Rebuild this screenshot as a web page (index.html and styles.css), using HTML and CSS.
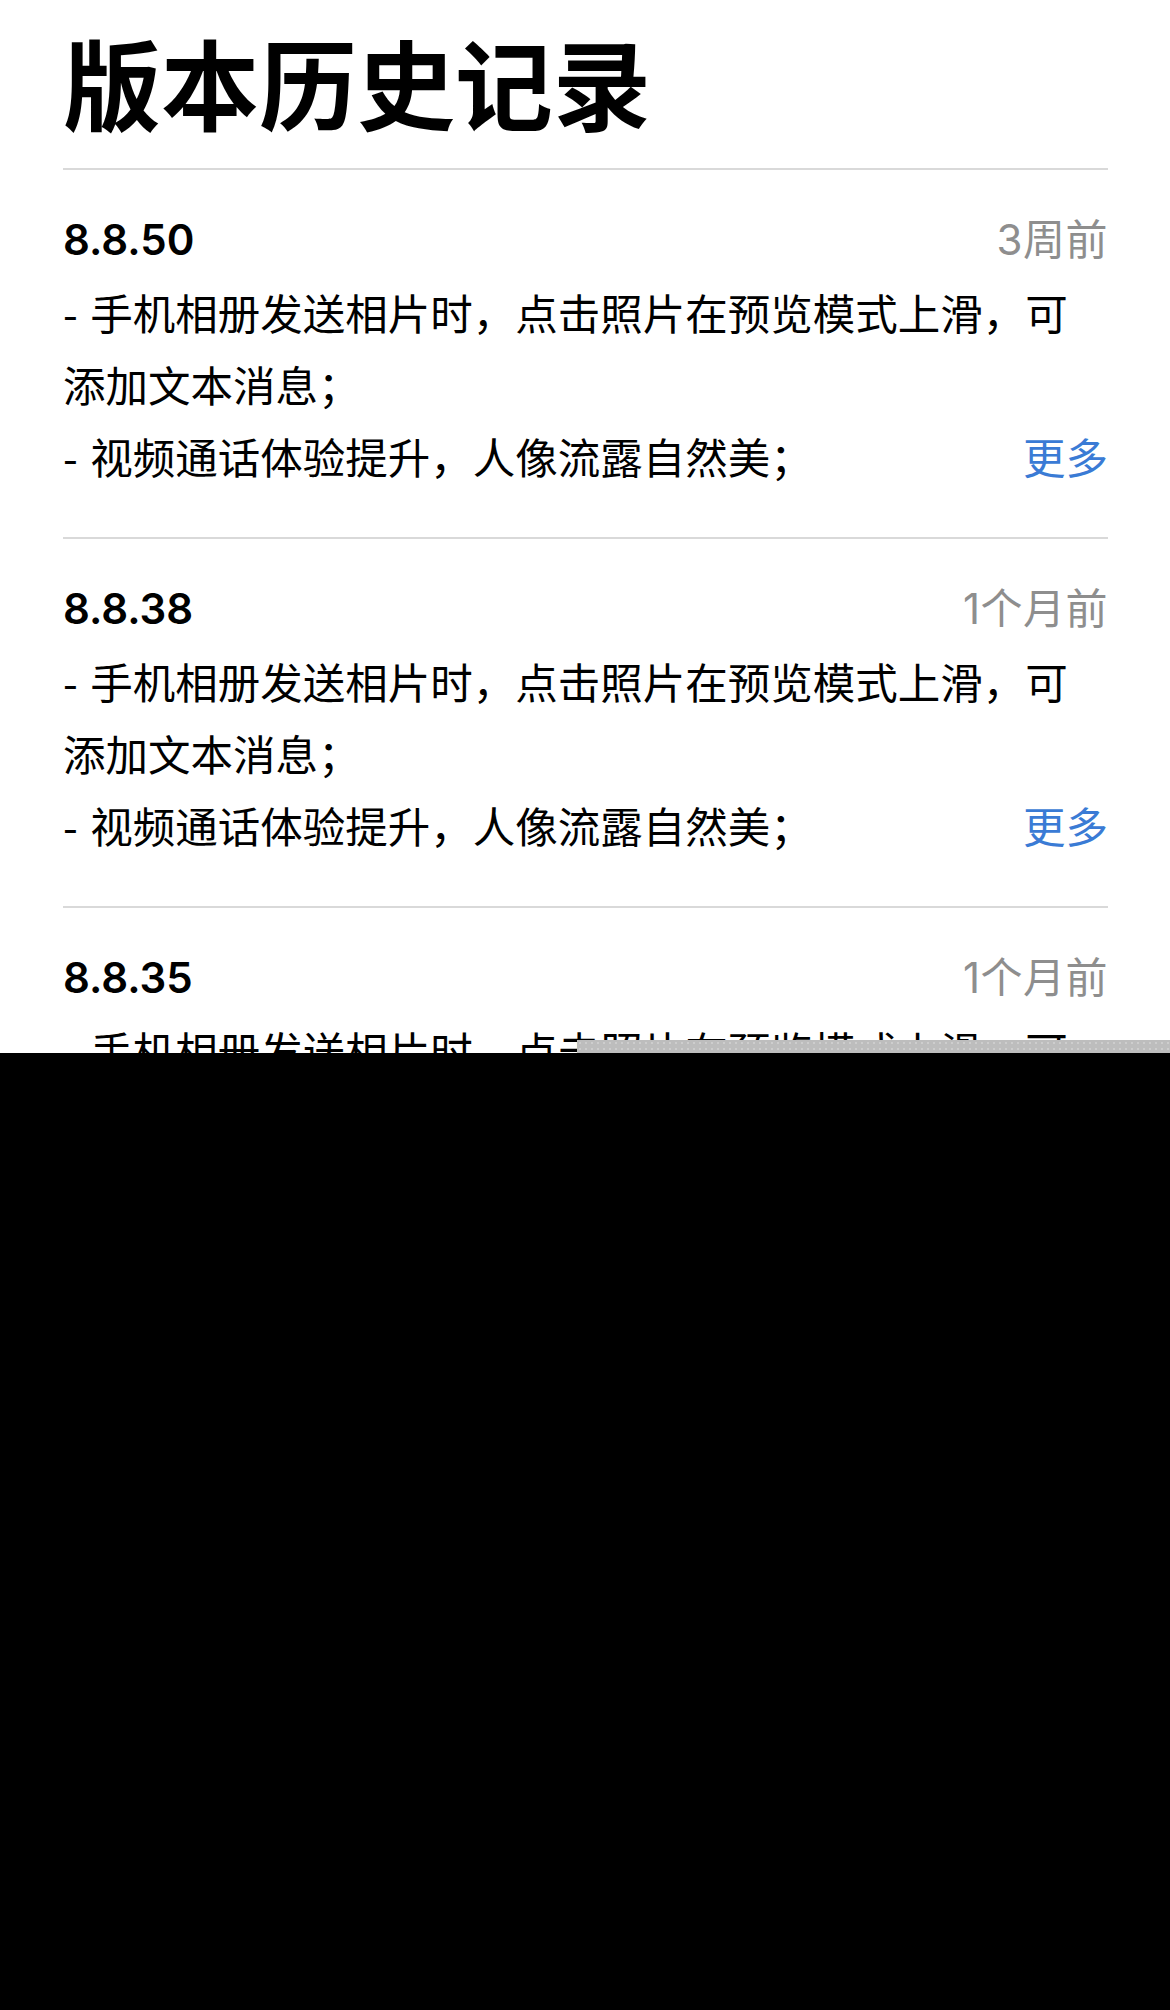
FILE: index.html
```html
<!DOCTYPE html>
<html lang="zh-CN">
<head>
<meta charset="utf-8">
<title>版本历史记录</title>
<link rel="stylesheet" href="styles.css">
</head>
<body>
<div class="screen">
  <h1 class="title">版本历史记录</h1>

  <section class="release">
    <div class="release-head">
      <span class="version">8.8.50</span>
      <span class="when">3周前</span>
    </div>
    <div class="notes">
      <p class="note">- 手机相册发送相片时，点击照片在预览模式上滑，可添加文本消息；</p>
      <div class="note-last">
        <p class="note">- 视频通话体验提升，人像流露自然美；</p>
        <span class="more">更多</span>
      </div>
    </div>
  </section>

  <section class="release">
    <div class="release-head">
      <span class="version">8.8.38</span>
      <span class="when">1个月前</span>
    </div>
    <div class="notes">
      <p class="note">- 手机相册发送相片时，点击照片在预览模式上滑，可添加文本消息；</p>
      <div class="note-last">
        <p class="note">- 视频通话体验提升，人像流露自然美；</p>
        <span class="more">更多</span>
      </div>
    </div>
  </section>

  <section class="release">
    <div class="release-head">
      <span class="version">8.8.35</span>
      <span class="when">1个月前</span>
    </div>
    <div class="notes">
      <p class="note">- 手机相册发送相片时，点击照片在预览模式上滑，可添加文本消息；</p>
      <div class="note-last">
        <p class="note">- 视频通话体验提升，人像流露自然美；</p>
        <span class="more">更多</span>
      </div>
    </div>
  </section>

  <div class="scroll-bar"></div>
</div>
</body>
</html>
```

FILE: styles.css
```css
html, body {
  margin: 0;
  padding: 0;
}

body {
  background: #000;
  width: 1170px;
  min-height: 2010px;
}

.screen {
  position: relative;
  height: 1053px;
  overflow: hidden;
  background: #fff;
  padding: 0 62px 0 63px;
  box-sizing: border-box;
  color: #000;
}

.title {
  margin: 0;
  padding-top: 20px;
  height: 168px;
  box-sizing: border-box;
  font-family: "Noto Sans CJK SC", sans-serif;
  font-weight: 700;
  font-size: 98px;
  line-height: 120px;
  letter-spacing: 0;
}

.release {
  border-top: 2px solid #d9d9d9;
  padding: 42px 0 45px;
}

.release-head {
  display: flex;
  justify-content: space-between;
  align-items: baseline;
  height: 56px;
  margin-bottom: 8px;
}

.version {
  font-family: "Inter", "Noto Sans", sans-serif;
  font-weight: 600;
  font-size: 42px;
  line-height: 56px;
}

.when {
  font-family: "Inter", "Noto Sans CJK SC", sans-serif;
  font-weight: 400;
  font-size: 42px;
  line-height: 56px;
  color: #8e8e8e;
  letter-spacing: 0.5px;
}

.notes {
  font-family: "Noto Sans CJK SC", sans-serif;
  font-size: 42.5px;
  line-height: 72px;
  word-spacing: 3px;
}

.note {
  margin: 0;
}

.note-last {
  display: flex;
  justify-content: space-between;
}

.more {
  color: #3a7bd5;
}

.scroll-bar {
  position: absolute;
  left: 577px;
  right: 0;
  top: 1040px;
  height: 13px;
  background-color: #bdbdbd;
  background-image: radial-gradient(#cdcdcd 0.8px, transparent 1px);
  background-size: 6px 6px;
}
```
